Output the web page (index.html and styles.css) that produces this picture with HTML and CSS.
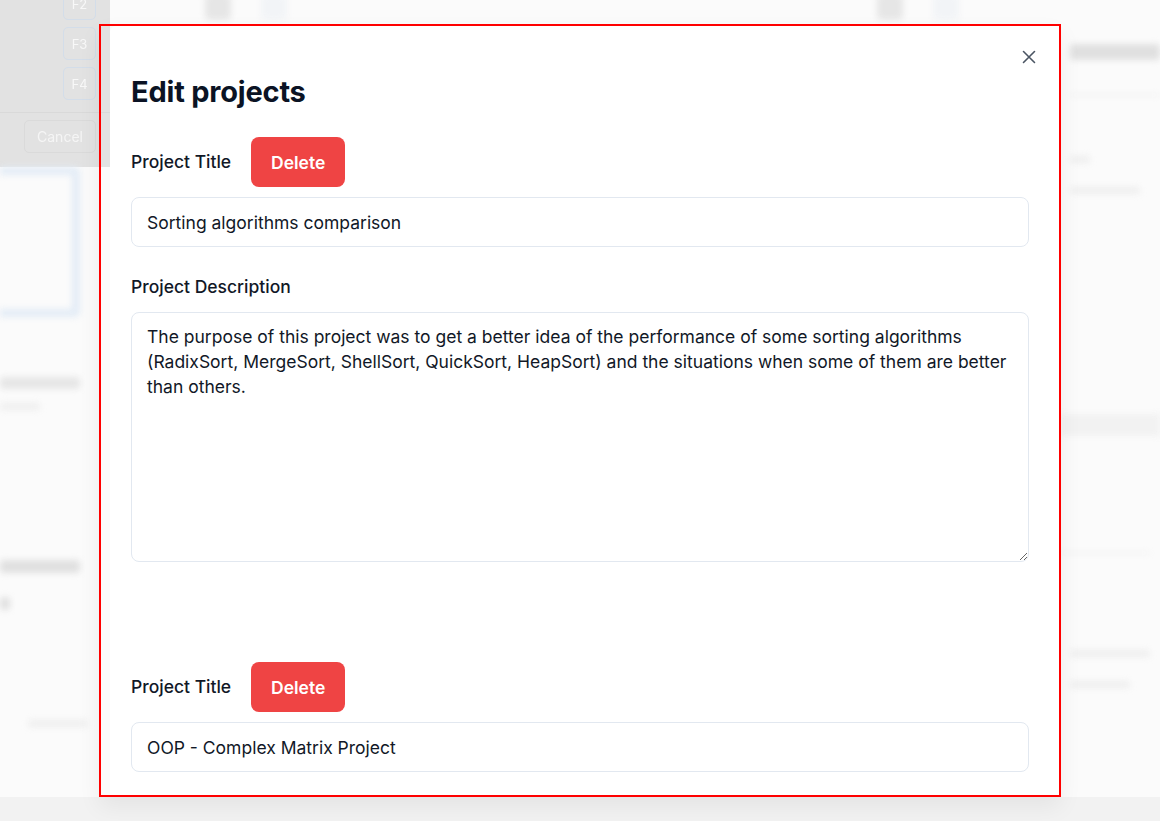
FILE: index.html
```html
<!DOCTYPE html>
<html lang="en">
<head>
<meta charset="utf-8">
<title>Edit projects</title>
<link rel="stylesheet" href="styles.css">
</head>
<body>
<div class="page" aria-hidden="true">
  <aside class="side">
    <div class="keys-panel">
      <div class="keys">
        <span class="key key-cut">F2</span>
        <span class="key">F3</span>
        <span class="key">F4</span>
      </div>
      <div class="keys-foot"><span class="cancel">Cancel</span></div>
    </div>
    <div class="soft">
      <div class="shape"></div>
      <div class="side-text">
        <span class="blur-line w80"></span>
        <span class="blur-line w40 thin"></span>
      </div>
      <div class="side-text lower">
        <span class="blur-line w80 dark"></span>
        <span class="blur-line w10 dark"></span>
      </div>
      <div class="side-foot"><span class="blur-line w60 thin"></span></div>
    </div>
  </aside>
  <main class="main soft">
    <div class="icons">
      <span class="ic"></span><span class="ic light"></span>
      <span class="spacer"></span>
      <span class="ic"></span><span class="ic light"></span>
    </div>
  </main>
  <aside class="right soft">
    <span class="blur-line w90 dark big"></span>
    <span class="rule"></span>
    <span class="blur-line w20 thin"></span>
    <span class="blur-line w70 thin"></span>
    <span class="band"></span>
    <span class="rule low"></span>
    <span class="blur-line w80 thin"></span>
    <span class="blur-line w60 thin"></span>
  </aside>
</div>
<div class="bottom-strip" aria-hidden="true"></div>

<div class="modal" role="dialog" aria-labelledby="modal-title">
  <div class="panel">
    <button class="close" aria-label="Close">
      <svg width="14" height="14" viewBox="0 0 14 14"><path d="M1.5 1.5 L12.5 12.5 M12.5 1.5 L1.5 12.5" stroke="#4b5563" stroke-width="1.6" stroke-linecap="round" fill="none"/></svg>
    </button>
    <h2 id="modal-title" class="title">Edit projects</h2>

    <section class="project">
      <div class="row">
        <label class="label" for="t1">Project Title</label>
        <button class="delete">Delete</button>
      </div>
      <input id="t1" class="field" type="text" value="Sorting algorithms comparison">
      <label class="label desc-label" for="d1">Project Description</label>
      <textarea id="d1" class="area">The purpose of this project was to get a better idea of the performance of some sorting algorithms (RadixSort, MergeSort, ShellSort, QuickSort, HeapSort) and the situations when some of them are better than others.</textarea>
    </section>

    <section class="project second">
      <div class="row">
        <label class="label" for="t2">Project Title</label>
        <button class="delete">Delete</button>
      </div>
      <input id="t2" class="field" type="text" value="OOP - Complex Matrix Project">
    </section>
  </div>
</div>
</body>
</html>
```

FILE: styles.css
```css
* { box-sizing: border-box; }
html, body { margin: 0; padding: 0; }
body {
  width: 1160px;
  height: 821px;
  overflow: hidden;
  background: #fafafa;
  font-family: Inter, "Noto Sans", "Liberation Sans", sans-serif;
  color: #111827;
}

/* ---------- blurred page behind the modal ---------- */
.page {
  display: flex;
  height: 797px;
  background: #fbfbfb;
}
.soft { filter: blur(3px); }
.side {
  width: 110px;
  display: flex;
  flex-direction: column;
}
.keys-panel {
  height: 167px;
  background: #e2e2e2;
  display: flex;
  flex-direction: column;
  filter: blur(0.6px);
}
.keys {
  display: flex;
  flex-direction: column;
  align-items: flex-end;
  gap: 7px;
  padding: 0 14px 0 0;
  margin-top: -13px;
  height: 126px;
  border-bottom: 1px solid #d9d9d9;
}
.key {
  width: 33px;
  height: 33px;
  border: 1px solid #d3dde9;
  border-radius: 5px;
  color: #f8f8f8;
  font-size: 13px;
  display: flex;
  align-items: center;
  justify-content: center;
}
.keys-foot {
  display: flex;
  justify-content: flex-end;
  padding: 0 14px 0 0;
  margin-top: 7px;
}
.cancel {
  width: 72px;
  height: 33px;
  border: 1px solid #dadada;
  border-radius: 5px;
  color: #f5f5f5;
  font-size: 14px;
  display: flex;
  align-items: center;
  justify-content: center;
}
.shape {
  height: 150px;
  width: 80px;
  border: 8px solid #e3ecf6;
  border-left: none;
  border-radius: 0 6px 6px 0;
}
.side-text {
  display: flex;
  flex-direction: column;
  gap: 14px;
  padding: 60px 0 0 0;
}
.side-text.lower { padding-top: 150px; gap: 24px; }
.side-foot { padding: 110px 0 0 28px; }
.blur-line {
  display: block;
  height: 12px;
  background: #e6e6e6;
  border-radius: 4px;
}
.blur-line.thin { height: 7px; background: #eeeeee; }
.blur-line.dark { background: #e0e0e0; height: 13px; }
.blur-line.big { height: 16px; }
.w10 { width: 10px; }
.w20 { width: 20px; }
.w40 { width: 40px; }
.w60 { width: 60px; }
.w70 { width: 70px; }
.w80 { width: 80px; }
.w90 { width: 90px; }

.main { flex: 1; }
.icons {
  display: flex;
  gap: 30px;
  padding: 0 0 0 95px;
  margin-top: -6px;
}
.ic {
  width: 26px;
  height: 26px;
  border-radius: 5px;
  background: #e6e6e6;
}
.ic.light { background: #f2f4f7; }
.spacer { width: 530px; }

.right {
  width: 100px;
  display: flex;
  flex-direction: column;
  padding: 44px 0 0 10px;
}
.right .big { margin-bottom: 34px; }
.rule { display: block; height: 2px; background: #f0f0f0; margin-bottom: 60px; width: 100%; }
.right .w20 { margin-bottom: 24px; }
.band { display: block; height: 22px; background: #f2f2f2; margin: 220px 0 0 -10px; }
.rule.low { margin: 116px 0 96px -10px; }
.right .w80 { margin-bottom: 24px; }

.bottom-strip {
  height: 24px;
  background: #f2f2f2;
}

/* ---------- modal ---------- */
.modal {
  position: fixed;
  left: 99px;
  top: 24px;
  width: 962px;
  height: 773px;
  border: 2px solid #ff0000;
  box-shadow: 0 10px 22px rgba(0, 0, 0, 0.06);
  display: flex;
}
.panel {
  position: relative;
  flex: 1;
  margin-left: 9px;
  background: #ffffff;
  padding: 48px 28px 0 21px;
  overflow: hidden;
  border-radius: 6px 0 0 0;
}
.close {
  position: absolute;
  top: 24px;
  right: 23px;
  width: 14px;
  height: 14px;
  padding: 0;
  border: none;
  background: transparent;
  display: flex;
}
.title {
  margin: 0;
  font-size: 29px;
  line-height: 36px;
  font-weight: 700;
  letter-spacing: -0.2px;
  color: #0b1324;
}
.project {
  display: flex;
  flex-direction: column;
}
.row {
  display: flex;
  align-items: center;
  gap: 20px;
  margin-top: 27px;
}
.label {
  font-size: 17.5px;
  line-height: 24px;
  font-weight: 500;
  color: #111827;
}
.delete {
  height: 50px;
  width: 94px;
  padding: 0;
  border: none;
  border-radius: 8px;
  background: #ef4444;
  color: #ffffff;
  font-family: inherit;
  font-size: 17.5px;
  font-weight: 600;
}
.field {
  margin-top: 10px;
  height: 50px;
  width: 898px;
  border: 1px solid #e2e8f0;
  border-radius: 8px;
  padding: 0 15px;
  font-family: inherit;
  font-size: 17.5px;
  color: #111827;
  background: #fff;
}
.desc-label { margin-top: 28px; }
.area {
  margin-top: 13px;
  width: 898px;
  height: 250px;
  border: 1px solid #e2e8f0;
  border-radius: 8px;
  padding: 11px 15px;
  font-family: inherit;
  font-size: 17.5px;
  line-height: 25px;
  color: #111827;
  background: #fff;
  resize: vertical;
}
.project.second .row { margin-top: 100px; }
```
